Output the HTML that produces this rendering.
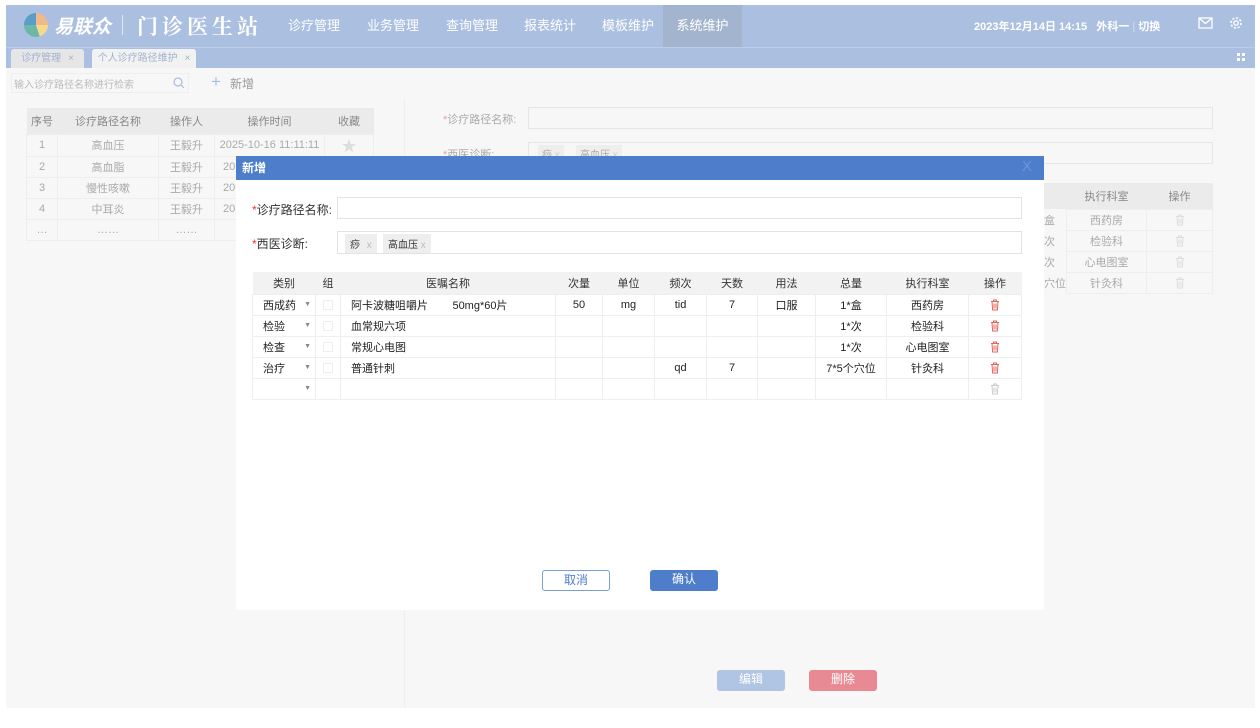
<!DOCTYPE html>
<html><head><meta charset="utf-8"><style>
*{margin:0;padding:0;box-sizing:border-box}
body{width:1260px;height:728px;background:#fff;font-family:"Liberation Sans","Noto Sans CJK SC",sans-serif;font-size:12px;color:#333;position:relative;overflow:hidden}
.a{position:absolute}
.hdr{left:6px;top:5px;width:1249px;height:42px;background:#abbfe0}
.nav{top:5px;height:42px;line-height:42px;color:#fff;font-size:13px}
.tabs{left:6px;top:47px;width:1249px;height:21px;background:#abbfe0;border-top:1px solid #bccbe6}
.tab{top:49px;height:19px;line-height:19px;font-size:10px;color:#a0b2d0;background:#e6e6e6;border-radius:3px 3px 0 0;text-align:center}
.page{left:6px;top:68px;width:1249px;height:640px;background:#f7f7f7}
table{border-collapse:collapse;position:absolute}
td,th{text-align:center;font-weight:normal;height:21px;padding:0}
.lt th{background:#ebebeb;color:#888;height:26px;font-size:11px}
.lt td{color:#aaa;font-size:11px;border:1px solid #eee;background:#f7f7f7}
.inp{background:#f7f7f7;border:1px solid #e6e6e6}
.modal{left:236px;top:156px;width:808px;height:454px;background:#fff}
.mt th{background:#f2f2f2;color:#333;font-size:11px;height:22px}
.mt td{border:1px solid #eee;font-size:11px;color:#222;position:relative}
.btn{height:21px;line-height:19px;text-align:center;border-radius:3px;font-size:12px}
.cb{display:inline-block;width:10px;height:10px;border:1px solid #eee;vertical-align:middle}
.ar{position:absolute;right:4px;top:6px;color:#888;font-size:7px}
svg.tr{vertical-align:middle}
</style></head><body>
<svg width="0" height="0" style="position:absolute"><defs><symbol id="tr" viewBox="0 0 10 12"><path d="M1 2.5h8M3.5 2.5V1h3v1.5M2 2.5l.6 8.5h4.8L8 2.5M4 4.5v5M6 4.5v5" fill="none" stroke="currentColor" stroke-width="1"/></symbol></defs></svg>
<div class="a hdr"></div>
<div class="a" style="left:24px;top:13px;width:24px;height:24px;border-radius:50%;background:conic-gradient(#f0b98a 0 25%,#f5d98c 25% 45%,#6cb8a8 45% 75%,#5a9ec8 75%)"></div>
<div class="a" style="left:54px;top:12px;color:#fff;font-size:19px;font-style:italic;font-weight:bold">易联众</div>
<div class="a" style="left:122px;top:15px;width:1px;height:20px;background:#e0e8f5"></div>
<div class="a" style="left:137px;top:11px;color:#fff;font-size:21px;letter-spacing:4px;font-family:'Noto Serif CJK SC',serif;font-weight:bold">门诊医生站</div>
<div class="a nav" style="left:288px">诊疗管理</div>
<div class="a nav" style="left:367px">业务管理</div>
<div class="a nav" style="left:446px">查询管理</div>
<div class="a nav" style="left:524px">报表统计</div>
<div class="a nav" style="left:602px">模板维护</div>
<div class="a nav" style="left:663px;width:79px;background:#a3b4cf;text-align:center">系统维护</div>
<div class="a" style="left:974px;top:18px;color:#fff;font-size:11px;font-weight:bold">2023年12月14日 14:15 &nbsp; 外科一 <span style="color:#d0dbef;font-weight:normal">|</span> 切换</div>
<svg class="a" style="left:1198px;top:17px" width="15" height="12"><rect x="1" y="1" width="13" height="10" fill="none" stroke="#fff" stroke-width="1.3"/><path d="M1 1l6.5 5.5L14 1" fill="none" stroke="#fff" stroke-width="1.3"/></svg>
<svg class="a" style="left:1229px;top:16px" width="14" height="14"><circle cx="7" cy="7" r="2.2" fill="none" stroke="#fff" stroke-width="1.3"/><circle cx="7" cy="7" r="5" fill="none" stroke="#fff" stroke-width="1.6" stroke-dasharray="2.2 1.7"/></svg>
<div class="a tabs"></div>
<div class="a tab" style="left:11px;width:73px">诊疗管理 <span style="margin-left:4px">×</span></div>
<div class="a tab" style="left:92px;width:104px;background:#f2f2f2">个人诊疗路径维护 <span style="margin-left:4px">×</span></div>
<svg class="a" style="left:1237px;top:53px" width="8" height="8"><rect x="0" y="0" width="3" height="3" fill="#fff"/><rect x="5" y="0" width="3" height="3" fill="#fff"/><rect x="0" y="5" width="3" height="3" fill="#fff"/><rect x="5" y="5" width="3" height="3" fill="#fff"/></svg>
<div class="a page"></div>
<div class="a inp" style="left:11px;top:73px;width:178px;height:20px;border-color:#eee"></div>
<div class="a" style="left:14px;top:76px;color:#bbb;font-size:10px">输入诊疗路径名称进行检索</div>
<svg class="a" style="left:173px;top:77px" width="12" height="12"><circle cx="5" cy="5" r="4" fill="none" stroke="#a9bde0" stroke-width="1.2"/><path d="M8 8l3 3" stroke="#a9bde0" stroke-width="1.2"/></svg>
<div class="a" style="left:211px;top:72px;color:#a9bde0;font-size:17px">+</div>
<div class="a" style="left:230px;top:75px;color:#999;font-size:12px">新增</div>
<div class="a" style="left:404px;top:98px;width:1px;height:610px;background:#eee"></div>
<table class="lt" style="left:26px;top:108px;width:348px">
<tr><th style="width:31px">序号</th><th style="width:101px">诊疗路径名称</th><th style="width:56px">操作人</th><th style="width:110px">操作时间</th><th>收藏</th></tr>
<tr><td>1</td><td>高血压</td><td>王毅升</td><td>2025-10-16 11:11:11</td><td style="color:#ddd;font-size:15px">★</td></tr>
<tr><td>2</td><td>高血脂</td><td>王毅升</td><td style="text-align:left;padding-left:8px">20</td><td></td></tr>
<tr><td>3</td><td>慢性咳嗽</td><td>王毅升</td><td style="text-align:left;padding-left:8px">20</td><td></td></tr>
<tr><td>4</td><td>中耳炎</td><td>王毅升</td><td style="text-align:left;padding-left:8px">20</td><td></td></tr>
<tr><td>…</td><td>……</td><td>……</td><td></td><td></td></tr>
</table>
<div class="a" style="left:443px;top:111px;color:#aaa;font-size:11px"><span style="color:#e8a0a0">*</span>诊疗路径名称:</div>
<div class="a inp" style="left:528px;top:107px;width:685px;height:22px"></div>
<div class="a" style="left:443px;top:146px;color:#aaa;font-size:11px"><span style="color:#e8a0a0">*</span>西医诊断:</div>
<div class="a inp" style="left:528px;top:142px;width:685px;height:22px"></div>
<div class="a" style="left:538px;top:145px;color:#aaa;font-size:10px;background:#eee;padding:1px 4px">痧 <span style="color:#ccc">x</span></div>
<div class="a" style="left:576px;top:145px;color:#aaa;font-size:10px;background:#eee;padding:1px 4px">高血压 <span style="color:#ccc">x</span></div>
<table class="lt" style="left:1044px;top:183px;width:169px">
<tr><th style="width:0;padding:0"></th><th style="width:80px;height:22px">执行科室</th><th>操作</th></tr>
<tr><td style="border:none;text-align:left;color:#aaa">盒</td><td>西药房</td><td style="color:#ddd"><svg class="tr" width="10" height="12"><use href="#tr"/></svg></td></tr>
<tr><td style="border:none;text-align:left">次</td><td>检验科</td><td style="color:#ddd"><svg class="tr" width="10" height="12"><use href="#tr"/></svg></td></tr>
<tr><td style="border:none;text-align:left">次</td><td>心电图室</td><td style="color:#ddd"><svg class="tr" width="10" height="12"><use href="#tr"/></svg></td></tr>
<tr><td style="border:none;text-align:left;white-space:nowrap">穴位</td><td>针灸科</td><td style="color:#ddd"><svg class="tr" width="10" height="12"><use href="#tr"/></svg></td></tr>
</table>
<div class="a btn" style="left:717px;top:670px;width:68px;background:#b0c4e4;color:#fff">编辑</div>
<div class="a btn" style="left:809px;top:670px;width:68px;background:#e88a94;color:#fff">删除</div>

<div class="a modal"></div>
<div class="a" style="left:236px;top:156px;width:808px;height:24px;background:#4e7ecb;color:#fff;font-weight:bold;font-size:12px;line-height:24px;padding-left:6px">新增</div>
<div class="a" style="left:1022px;top:158px;color:#6f95d6;font-size:15px">X</div>
<div class="a" style="left:252px;top:201px;font-size:12px"><span style="color:#e33">*</span>诊疗路径名称:</div>
<div class="a" style="left:337px;top:197px;width:685px;height:22px;border:1px solid #e3e3e3"></div>
<div class="a" style="left:252px;top:235px;font-size:12px"><span style="color:#e33">*</span>西医诊断:</div>
<div class="a" style="left:337px;top:231px;width:685px;height:23px;border:1px solid #e3e3e3"></div>
<div class="a" style="left:345px;top:234px;font-size:10px;background:#eee;padding:2px 5px">痧 <span style="color:#bbb;margin-left:4px">x</span></div>
<div class="a" style="left:383px;top:234px;font-size:10px;background:#eee;padding:2px 5px">高血压 <span style="color:#bbb">x</span></div>
<table class="mt" style="left:252px;top:272px;width:770px">
<tr><th style="width:63px">类别</th><th style="width:25px">组</th><th style="width:215px">医嘱名称</th><th style="width:47px">次量</th><th style="width:52px">单位</th><th style="width:52px">频次</th><th style="width:51px">天数</th><th style="width:58px">用法</th><th style="width:71px">总量</th><th style="width:82px">执行科室</th><th>操作</th></tr>
<tr><td style="text-align:left;padding-left:10px">西成药<span class="ar">▼</span></td><td><span class="cb"></span></td><td style="text-align:left;padding-left:10px">阿卡波糖咀嚼片 &nbsp;&nbsp;&nbsp;&nbsp;&nbsp;&nbsp;&nbsp;50mg*60片</td><td>50</td><td>mg</td><td>tid</td><td>7</td><td>口服</td><td>1*盒</td><td>西药房</td><td style="color:#e0665c"><svg class="tr" width="10" height="12"><use href="#tr"/></svg></td></tr>
<tr><td style="text-align:left;padding-left:10px">检验<span class="ar">▼</span></td><td><span class="cb"></span></td><td style="text-align:left;padding-left:10px">血常规六项</td><td></td><td></td><td></td><td></td><td></td><td>1*次</td><td>检验科</td><td style="color:#e0665c"><svg class="tr" width="10" height="12"><use href="#tr"/></svg></td></tr>
<tr><td style="text-align:left;padding-left:10px">检查<span class="ar">▼</span></td><td><span class="cb"></span></td><td style="text-align:left;padding-left:10px">常规心电图</td><td></td><td></td><td></td><td></td><td></td><td>1*次</td><td>心电图室</td><td style="color:#e0665c"><svg class="tr" width="10" height="12"><use href="#tr"/></svg></td></tr>
<tr><td style="text-align:left;padding-left:10px">治疗<span class="ar">▼</span></td><td><span class="cb"></span></td><td style="text-align:left;padding-left:10px">普通针刺</td><td></td><td></td><td>qd</td><td>7</td><td></td><td>7*5个穴位</td><td>针灸科</td><td style="color:#e0665c"><svg class="tr" width="10" height="12"><use href="#tr"/></svg></td></tr>
<tr><td><span class="ar">▼</span></td><td></td><td></td><td></td><td></td><td></td><td></td><td></td><td></td><td></td><td style="color:#ccc"><svg class="tr" width="10" height="12"><use href="#tr"/></svg></td></tr>
</table>
<div class="a btn" style="left:542px;top:570px;width:68px;border:1px solid #7a9fd8;color:#4e7ecb">取消</div>
<div class="a btn" style="left:650px;top:570px;width:68px;background:#4e7ecb;color:#fff">确认</div>
</body></html>
